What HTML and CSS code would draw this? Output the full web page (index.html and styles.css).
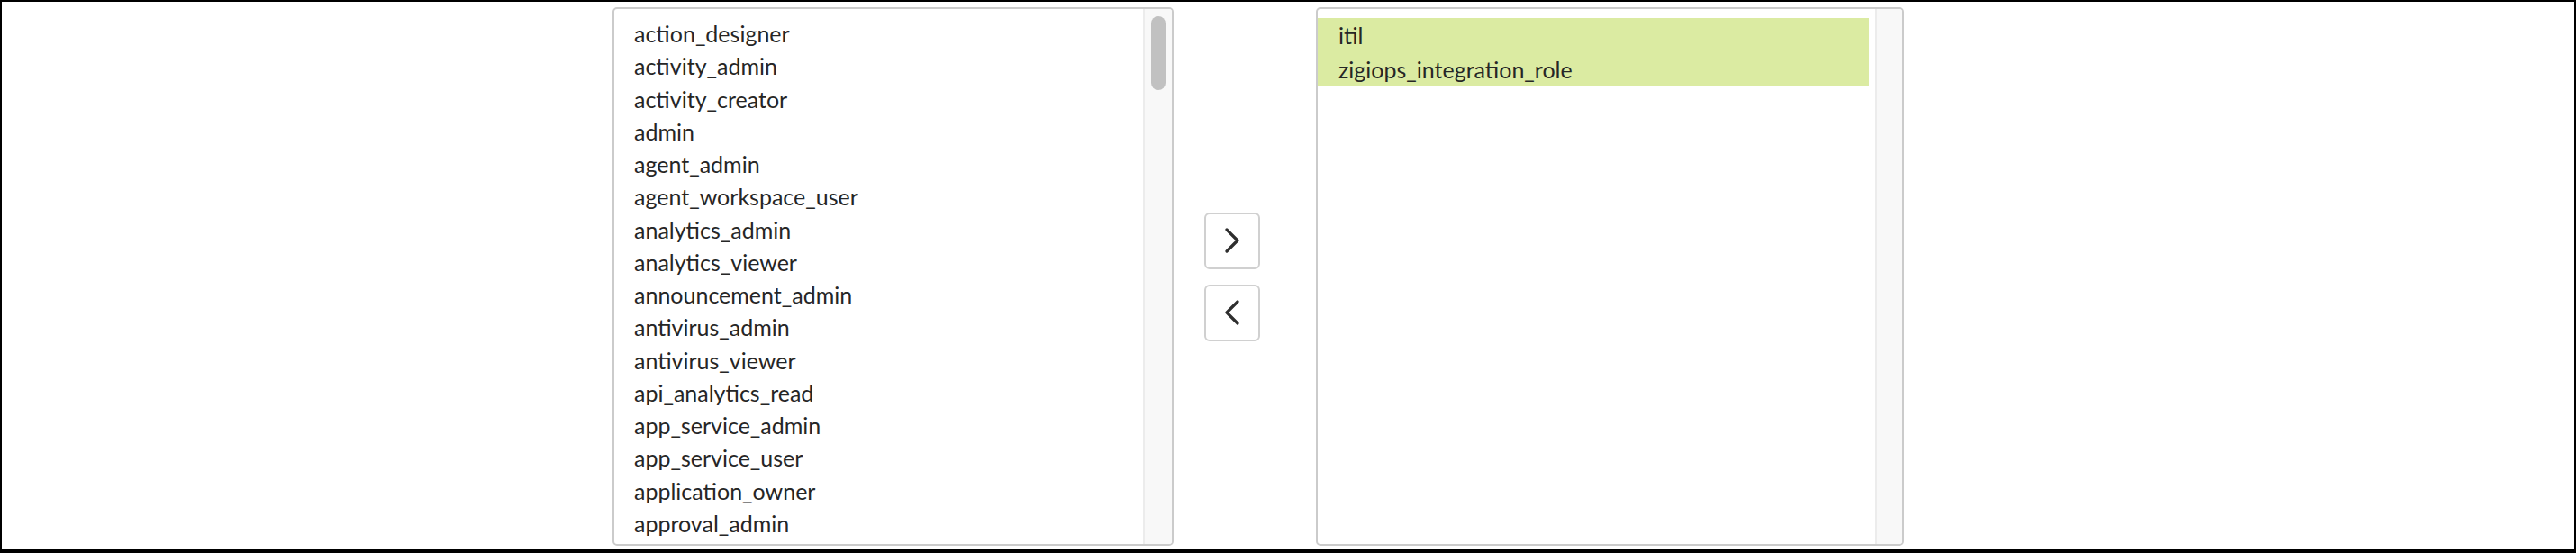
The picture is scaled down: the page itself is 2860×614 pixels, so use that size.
FILE: index.html
```html
<!DOCTYPE html>
<html lang="en">
<head>
<meta charset="UTF-8">
<title>Roles</title>
<link rel="stylesheet" href="styles.css">
</head>
<body>
<div class="frame">
  <div class="bucket">
    <div class="list-box available">
      <div class="options">
        <div class="option">action_designer</div>
        <div class="option">activity_admin</div>
        <div class="option">activity_creator</div>
        <div class="option">admin</div>
        <div class="option">agent_admin</div>
        <div class="option">agent_workspace_user</div>
        <div class="option">analytics_admin</div>
        <div class="option">analytics_viewer</div>
        <div class="option">announcement_admin</div>
        <div class="option">antivirus_admin</div>
        <div class="option">antivirus_viewer</div>
        <div class="option">api_analytics_read</div>
        <div class="option">app_service_admin</div>
        <div class="option">app_service_user</div>
        <div class="option">application_owner</div>
        <div class="option">approval_admin</div>
      </div>
      <div class="scroll-track"><div class="scroll-thumb"></div></div>
    </div>

    <div class="move-buttons">
      <button class="move-btn" title="Add">
        <svg width="16" height="28" viewBox="0 0 16 28"><path d="M2 2 L14 14 L2 26" fill="none" stroke="#2e2e2e" stroke-width="3.2" stroke-linecap="round" stroke-linejoin="round"/></svg>
      </button>
      <button class="move-btn" title="Remove">
        <svg width="16" height="28" viewBox="0 0 16 28"><path d="M14 2 L2 14 L14 26" fill="none" stroke="#2e2e2e" stroke-width="3.2" stroke-linecap="round" stroke-linejoin="round"/></svg>
      </button>
    </div>

    <div class="list-box selected">
      <div class="options">
        <div class="option picked">itil</div>
        <div class="option picked">zigiops_integration_role</div>
      </div>
      <div class="scroll-track"></div>
    </div>
  </div>
</div>
</body>
</html>
```

FILE: styles.css
```css
html, body {
  margin: 0;
  padding: 0;
  background: #fff;
}
body {
  font-family: Lato, "Noto Sans", sans-serif;
  color: #262626;
}
.frame {
  height: 614px;
  box-sizing: border-box;
  border: 2px solid #000;
  border-bottom-width: 4px;
  padding: 6px 0 0 678px;
}
.bucket {
  display: flex;
  align-items: center;
}
.list-box {
  display: flex;
  height: 598px;
  box-sizing: border-box;
  border: 2px solid #cbcbcb;
  border-radius: 5px;
  background: #fff;
  overflow: hidden;
}
.available {
  width: 623px;
}
.selected {
  width: 653px;
  margin-left: 62px;
}
.options {
  flex: 1;
  overflow: hidden;
}
.available .options {
  padding-top: 9px;
}
.selected .options {
  padding: 10px 7px 0 0;
}
.option {
  height: 36.25px;
  line-height: 36px;
  padding-left: 22px;
  font-size: 25px;
  white-space: nowrap;
}
.option.picked {
  height: 38px;
  line-height: 38px;
  padding-left: 23px;
  background: #dbeba2;
}
.scroll-track {
  width: 28px;
  background: #f8f8f8;
  border-left: 2px solid #ececec;
  position: relative;
}
.available .scroll-track {
  width: 30px;
}
.scroll-thumb {
  position: absolute;
  top: 8px;
  left: 7px;
  width: 16px;
  height: 82px;
  border-radius: 8px;
  background: #c1c1c1;
}
.move-buttons {
  display: flex;
  flex-direction: column;
  gap: 17px;
  margin-left: 34px;
}
.move-btn {
  width: 62px;
  height: 63px;
  border: 2px solid #d0d0d0;
  border-radius: 6px;
  background: #fff;
  display: flex;
  align-items: center;
  justify-content: center;
  padding: 0;
  cursor: pointer;
}
```
